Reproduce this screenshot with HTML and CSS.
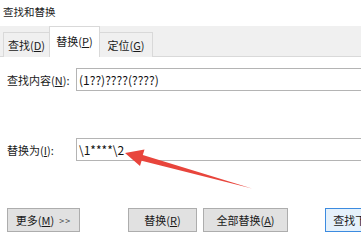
FILE: index.html
```html
<!DOCTYPE html>
<html lang="zh-CN">
<head>
<meta charset="utf-8">
<title>查找和替换</title>
<link rel="stylesheet" href="styles.css">
</head>
<body>
<div class="dialog">
  <div class="title">查找和替换</div>
  <div class="tabs">
    <div class="tab">查找(<u>D</u>)</div>
    <div class="tab active">替换(<u>P</u>)</div>
    <div class="tab">定位(<u>G</u>)</div>
  </div>
  <div class="panel">
    <div class="row first">
      <div class="label">查找内容(<u>N</u>):</div>
      <div class="input">(1??)????(????)</div>
    </div>
    <div class="row second">
      <div class="label">替换为(<u>I</u>):</div>
      <div class="input">\1****\2</div>
    </div>
    <div class="buttons">
      <div class="btn more">更多(<u>M</u>) <span class="chev">&gt;&gt;</span></div>
      <div class="btn replace">替换(<u>R</u>)</div>
      <div class="btn all">全部替换(<u>A</u>)</div>
      <div class="btn next">查找下一处(<u>F</u>)</div>
    </div>
  </div>
  <svg class="arrow" width="361" height="232" viewBox="0 0 361 232">
    <polygon points="125,153 144.5,149.5 142.8,155 252,188.5 141.6,160.8 140,166" fill="#e8453c"/>
  </svg>
</div>
</body>
</html>
```

FILE: styles.css
```css
html, body {
  margin: 0;
  padding: 0;
  background: #ffffff;
}
body {
  width: 361px;
  height: 232px;
  overflow: hidden;
  font-family: "Noto Sans CJK SC", "Noto Sans", sans-serif;
  color: #1a1a1a;
}
.dialog {
  position: relative;
  width: 361px;
  height: 232px;
  overflow: hidden;
}
.title {
  height: 26px;
  line-height: 24px;
  padding-left: 3px;
  font-size: 10.5px;
  color: #222;
}
.tabs {
  height: 30px;
  background: #f0f0f0;
  border-bottom: 1px solid #d9d9d9;
  display: flex;
  align-items: flex-end;
  padding-left: 3px;
}
.tab {
  box-sizing: border-box;
  height: 24px;
  width: 47px;
  border: 1px solid #d9d9d9;
  border-bottom: none;
  background: #f0f0f0;
  font-size: 11px;
  display: flex;
  align-items: center;
  justify-content: center;
  margin-bottom: -1px;
  height: 25px;
}
.tab + .tab {
  margin-left: -1px;
}
.tab.active {
  width: 51px;
  height: 31px;
  background: #ffffff;
  padding-bottom: 3px;
}
.tab:last-child {
  width: 54px;
}
.panel {
  padding: 11px 0 0 7px;
}
.row {
  display: flex;
  align-items: center;
}
.row.second {
  margin-top: 47px;
}
.label {
  width: 69px;
  font-size: 11px;
  flex: none;
}
.input {
  box-sizing: border-box;
  height: 23px;
  width: 300px;
  border: 1px solid #b4b4b4;
  padding-left: 2px;
  font-size: 12px;
  line-height: 21px;
  color: #111;
  flex: none;
}
.buttons {
  display: flex;
  margin-top: 47px;
}
.btn {
  box-sizing: border-box;
  height: 24px;
  background: #e1e1e1;
  border: 1px solid #adadad;
  font-size: 11px;
  display: flex;
  align-items: center;
  justify-content: center;
  flex: none;
  white-space: nowrap;
}
.btn.more {
  width: 73px;
}
.chev {
  font-size: 9px;
  letter-spacing: 1px;
  margin-left: 5px;
  color: #444;
}
.btn.replace {
  width: 69px;
  margin-left: 48px;
}
.btn.all {
  width: 85px;
  margin-left: 6px;
}
.btn.next {
  width: 85px;
  margin-left: 37px;
  border-color: #3c8be0;
  background: #e5f1fb;
}
.arrow {
  position: absolute;
  left: 0;
  top: 0;
  pointer-events: none;
}
```
